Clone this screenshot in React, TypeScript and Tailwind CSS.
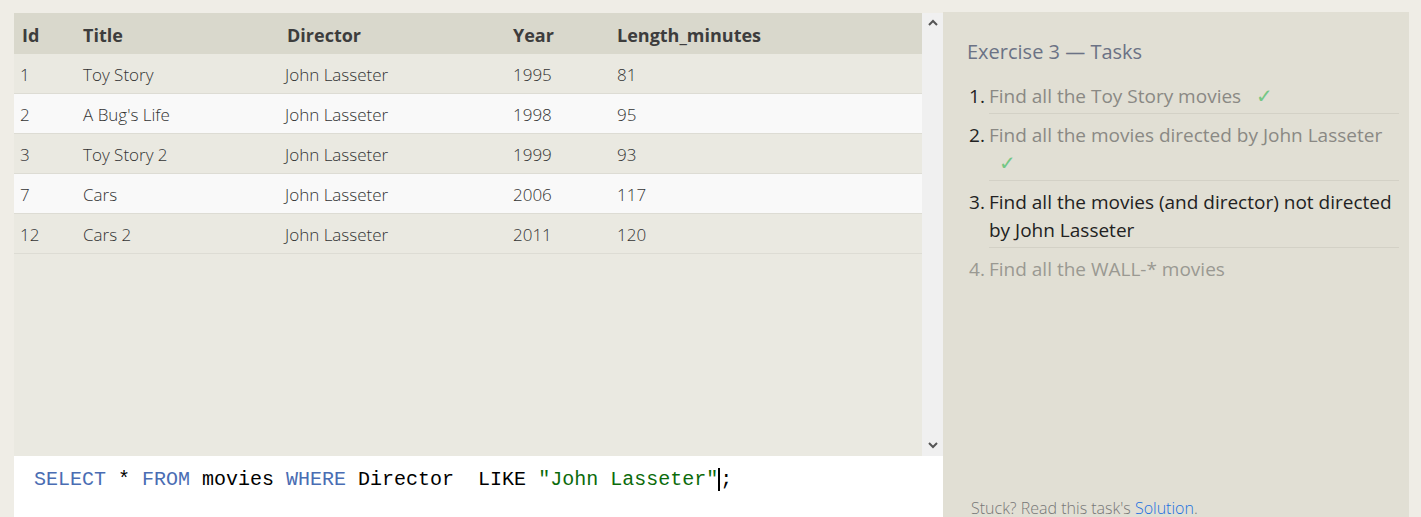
import React from 'react';

const MOVIES = [
  { id: 1, title: 'Toy Story', director: 'John Lasseter', year: 1995, length: 81 },
  { id: 2, title: "A Bug's Life", director: 'John Lasseter', year: 1998, length: 95 },
  { id: 3, title: 'Toy Story 2', director: 'John Lasseter', year: 1999, length: 93 },
  { id: 7, title: 'Cars', director: 'John Lasseter', year: 2006, length: 117 },
  { id: 12, title: 'Cars 2', director: 'John Lasseter', year: 2011, length: 120 },
];

const TASKS = [
  { text: 'Find all the Toy Story movies', state: 'done' },
  { text: 'Find all the movies directed by John Lasseter', state: 'done' },
  { text: 'Find all the movies (and director) not directed by John Lasseter', state: 'current' },
  { text: 'Find all the WALL-* movies', state: 'todo' },
];

const COLS = 'grid grid-cols-[61px_204px_226px_104px_1fr]';

function Chevron({ up }: { up?: boolean }) {
  return (
    <svg width="10" height="7" viewBox="0 0 10 7" className="text-[#555]">
      <path
        d={up ? 'M1 6 L5 2 L9 6' : 'M1 1 L5 5 L9 1'}
        fill="none"
        stroke="currentColor"
        strokeWidth="2"
      />
    </svg>
  );
}

export default function App() {
  return (
    <div className="h-[517px] overflow-hidden bg-[#efede6] flex items-start pt-[13px] pl-[14px] pr-[12px] font-['Open_Sans',sans-serif]">
      {/* ── results + editor ── */}
      <div className="w-[929px] flex flex-col">
        <div className="flex h-[443px]">
          <div className="w-[908px] bg-[#eae9e1]">
            <div className={`${COLS} h-[41px] items-center pt-[3px] bg-[#d9d8cc] text-[18px] font-bold text-[#3d3d3d]`}>
              <div className="pl-[8px]">Id</div>
              <div className="pl-[8px]">Title</div>
              <div className="pl-[8px]">Director</div>
              <div className="pl-[8px]">Year</div>
              <div className="pl-[8px]">Length_minutes</div>
            </div>
            {MOVIES.map((m, i) => (
              <div
                key={m.id}
                className={`${COLS} h-[40px] items-center pt-[2px] text-[17px] font-light text-[#333] border-b border-[#dddcd4] ${
                  i % 2 === 1 ? 'bg-[#f9f9f9]' : 'bg-[#eae9e1]'
                }`}
              >
                <div className="pl-[6px]">{m.id}</div>
                <div className="pl-[8px]">{m.title}</div>
                <div className="pl-[6px]">{m.director}</div>
                <div className="pl-[8px]">{m.year}</div>
                <div className="pl-[8px]">{m.length}</div>
              </div>
            ))}
          </div>
          {/* scrollbar */}
          <div className="w-[21px] bg-[#f0f0f0] flex flex-col items-center justify-between pt-[6px] pb-[7px]">
            <Chevron up />
            <Chevron />
          </div>
        </div>
        <div className="h-[80px] bg-white pl-[20px] pt-[12px] leading-[24px] text-[20px] font-['Liberation_Mono',monospace] text-black whitespace-pre">
          <span className="text-[#4a6db3]">SELECT</span> * <span className="text-[#4a6db3]">FROM</span> movies{' '}
          <span className="text-[#4a6db3]">WHERE</span> Director  LIKE{' '}
          <span className="text-[#0b6b0b]">"John Lasseter"</span>
          <span className="border-l-2 border-black">;</span>
        </div>
      </div>

      {/* ── tasks ── */}
      <div className="w-[466px] h-[520px] -mt-[1px] bg-[#e1dfd4] flex flex-col pl-[24px] pr-[10px] pb-[12px]">
        <h2 className="pt-[24px] text-[20px] leading-[32px] text-[#6b7285]">Exercise 3 — Tasks</h2>
        <ol className="mt-[7px]">
          {TASKS.map((t, i) => (
            <li
              key={i}
              className={`flex text-[19px] leading-[28px] ${
                t.state === 'todo' ? 'text-[#9a9992]' : 'text-[#8a8984]'
              }`}
            >
              <span className={`w-[22px] shrink-0 pl-[2px] pt-[7px] ${t.state === 'todo' ? '' : 'text-[#222]'}`}>
                {i + 1}.
              </span>
              <span
                className={`flex-1 pt-[7px] pb-[3px] ${i < TASKS.length - 1 ? 'border-b border-[#d3d1c6]' : ''} ${
                  t.state === 'current' ? 'text-[#222]' : ''
                }`}
              >
                {t.text}{' '}
                {t.state === 'done' && (
                  <span className="inline-block ml-[10px] text-[20px] font-light text-[#74c785]">✓</span>
                )}
              </span>
            </li>
          ))}
        </ol>
        <p className="mt-auto pl-[4px] text-[16px] leading-[24px] font-light text-[#777]">
          Stuck? Read this task's <span className="text-[#1a6fe0]">Solution</span>.
        </p>
      </div>
    </div>
  );
}
